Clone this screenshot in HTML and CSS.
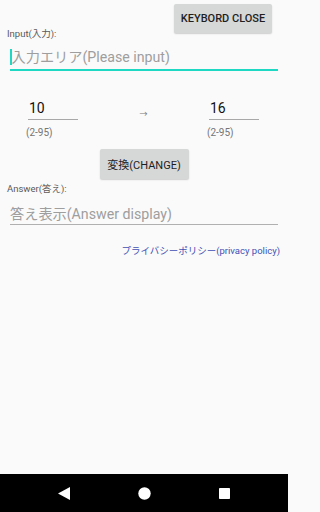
FILE: index.html
```html
<!DOCTYPE html>
<html lang="ja">
<head>
<meta charset="utf-8">
<title>Base converter</title>
<link rel="stylesheet" href="styles.css">
</head>
<body>
<div class="screen">
  <main class="content">
    <div class="top">
      <span class="label input-label">Input(入力):</span>
      <button class="btn close-btn">KEYBORD CLOSE</button>
    </div>
    <div class="field input-field"><span class="cursor"></span><span class="ph">入力エリア(Please input)</span></div>
    <div class="nums">
      <div class="num">
        <div class="numval">10</div>
        <div class="range">(2-95)</div>
      </div>
      <div class="arrow">→</div>
      <div class="num">
        <div class="numval">16</div>
        <div class="range">(2-95)</div>
      </div>
    </div>
    <div class="center"><button class="btn change-btn">変換(CHANGE)</button></div>
    <div class="label answer-label">Answer(答え):</div>
    <div class="field answer-field"><span class="ph">答え表示(Answer display)</span></div>
    <div class="privacy"><a class="privacy-link">プライバシーポリシー(privacy policy)</a></div>
  </main>
  <nav class="navbar">
    <svg class="nav-icon" width="12" height="13" viewBox="0 0 12 13"><polygon points="12,0 12,13 0,6.5" fill="#fff"/></svg>
    <svg class="nav-icon" width="13" height="13" viewBox="0 0 13 13"><circle cx="6.5" cy="6.5" r="6.2" fill="#fff"/></svg>
    <svg class="nav-icon" width="11" height="11" viewBox="0 0 11 11"><rect x="0" y="0" width="11" height="11" rx="0.8" fill="#fff"/></svg>
  </nav>
</div>
</body>
</html>
```

FILE: styles.css
```css
html, body {
  margin: 0;
  padding: 0;
  background: #fafafa;
}
body {
  font-family: Roboto, "Noto Sans CJK JP", sans-serif;
  color: #212121;
}
.screen {
  width: 288px;
  height: 512px;
  display: flex;
  flex-direction: column;
  background: #fafafa;
}
.content {
  flex: 1;
  display: flex;
  flex-direction: column;
}
.top {
  display: flex;
  justify-content: space-between;
  align-items: flex-start;
  padding: 4px 16px 0 7px;
}
.label {
  font-size: 9.5px;
  line-height: 12px;
  color: #595959;
}
.input-label {
  margin-top: 24px;
}
.btn {
  border: none;
  background: #d6d7d7;
  border-radius: 2px;
  box-shadow: 0 1px 1.5px rgba(0,0,0,0.18);
  font-family: Roboto, "Noto Sans CJK JP", sans-serif;
  font-weight: 500;
  color: #1f1f1f;
  padding: 0;
}
.close-btn {
  width: 98px;
  height: 29px;
  font-size: 11px;
}
.field {
  margin: 0 10px;
  font-size: 14.2px;
  line-height: 20px;
  color: #9e9e9e;
  display: flex;
  align-items: center;
}
.input-field {
  padding: 7px 0 2px;
  border-bottom: 2px solid #1ed8c4;
}
.cursor {
  width: 1.5px;
  height: 16px;
  background: #1ed8c4;
}
.nums {
  display: flex;
  padding-left: 28px;
  margin-top: 29px;
}
.num {
  width: 50px;
}
.numval {
  font-size: 14px;
  line-height: 16px;
  padding: 0 0 3px 1px;
  border-bottom: 1px solid #a8a8a8;
  color: #111;
}
.range {
  font-size: 10px;
  line-height: 12px;
  color: #757575;
  margin: 7px 0 0 -2px;
}
.arrow {
  width: 131px;
  text-align: center;
  font-size: 8px;
  color: #777;
  padding-top: 8px;
}
.center {
  display: flex;
  justify-content: center;
  margin-top: 10px;
}
.change-btn {
  width: 89px;
  height: 30px;
  font-size: 11px;
  font-weight: 400;
}
.answer-label {
  margin: 4px 0 0 7px;
}
.answer-field {
  padding-top: 9px;
  line-height: 20px;
  border-bottom: 1px solid #b0b0b0;
}
.privacy {
  display: flex;
  justify-content: flex-end;
  padding-right: 8px;
  margin-top: 20px;
}
.privacy-link {
  font-size: 9.5px;
  line-height: 12px;
  color: #3f51b5;
}
.navbar {
  height: 38px;
  flex: none;
  background: #000;
  display: flex;
  align-items: center;
  justify-content: space-between;
  padding: 0 58px;
}
.nav-icon {
  display: block;
}
```
